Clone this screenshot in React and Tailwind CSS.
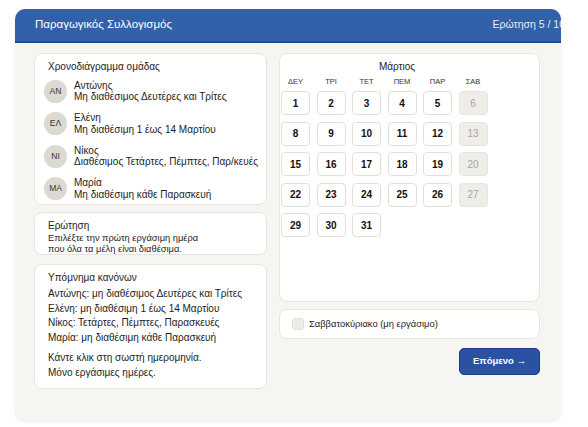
import React from 'react'

const members = [
    { initials: 'AN', name: 'Αντώνης', note: 'Μη διαθέσιμος Δευτέρες και Τρίτες' },
    { initials: 'ΕΛ', name: 'Ελένη', note: 'Μη διαθέσιμη 1 έως 14 Μαρτίου' },
    { initials: 'NI', name: 'Νίκος', note: 'Διαθέσιμος Τετάρτες, Πέμπτες, Παρ/κευές' },
    { initials: 'MA', name: 'Μαρία', note: 'Μη διαθέσιμη κάθε Παρασκευή' },
]

const rules = [
    'Αντώνης: μη διαθέσιμος Δευτέρες και Τρίτες',
    'Ελένη: μη διαθέσιμη 1 έως 14 Μαρτίου',
    'Νίκος: Τετάρτες, Πέμπτες, Παρασκευές',
    'Μαρία: μη διαθέσιμη κάθε Παρασκευή',
]

const dayNames = ['ΔΕΥ', 'ΤΡΙ', 'ΤΕΤ', 'ΠΕΜ', 'ΠΑΡ', 'ΣΑΒ']

// March: rows of Mon..Sat, Sundays left out
const weeks = [
    [1, 2, 3, 4, 5, 6],
    [8, 9, 10, 11, 12, 13],
    [15, 16, 17, 18, 19, 20],
    [22, 23, 24, 25, 26, 27],
    [29, 30, 31],
]

const Card = ({ className = '', children }) => (
    <div className={`bg-white border border-[#e8e5df] rounded-[8px] ${className}`}>{children}</div>
)

export default function App() {
    return (
        <div className="w-[588px] h-[427px] bg-white pt-[9px] pl-[15px] font-['Liberation_Sans',Arial,sans-serif] text-[#1d1d1d]">
            <div className="w-[546px] h-[412px] rounded-[10px] overflow-hidden bg-[#f6f5f2] shadow-[0_1px_3px_rgba(0,0,0,0.08)] flex flex-col">
                <div className="h-[34px] shrink-0 bg-[#3261aa] border-b-2 border-[#24498f] flex items-center pl-[20px] text-white text-[11.5px]">
                    <span>Παραγωγικός Συλλογισμός</span>
                    <span className="ml-auto whitespace-nowrap shrink-0 mr-[-4px] text-[10.5px] text-[#e6ecf7]">Ερώτηση 5 / 10</span>
                </div>

                <div className="flex gap-[12px] pl-[19px] pr-[20px] pt-[10px]">
                    <div className="w-[233px] shrink-0 flex flex-col">
                        <Card className="h-[152px] pt-[6px]">
                            <div className="pl-[13px] text-[10px] leading-[13px]">Χρονοδιάγραμμα ομάδας</div>
                            <div className="flex flex-col mt-[2px]">
                                {members.map((m) => (
                                    <div key={m.initials} className="flex items-center h-[32.5px] pl-[9px]">
                                        <div className="w-[23px] h-[23px] rounded-full bg-[#dcd9d2] flex items-center justify-center text-[8.5px] text-[#333]">
                                            {m.initials}
                                        </div>
                                        <div className="ml-[7px] flex flex-col">
                                            <span className="text-[10px] leading-[11.5px]">{m.name}</span>
                                            <span className="text-[10px] leading-[11.5px] whitespace-nowrap">{m.note}</span>
                                        </div>
                                    </div>
                                ))}
                            </div>
                        </Card>

                        <Card className="h-[43px] mt-[7px] overflow-hidden pl-[13px] pt-[7px]">
                            <div className="text-[10px] leading-[12px]">Ερώτηση</div>
                            <div className="text-[9.3px] leading-[11px] mt-[1px]">
                                Επιλέξτε την πρώτη εργάσιμη ημέρα
                                <br />
                                που όλα τα μέλη είναι διαθέσιμα.
                            </div>
                        </Card>

                        <Card className="h-[125px] mt-[9px] pl-[13px] pt-[7px]">
                            <div className="text-[10px] leading-[12px]">Υπόμνημα κανόνων</div>
                            <div className="mt-[3px] text-[10px] leading-[14.5px] whitespace-nowrap">
                                {rules.map((r) => (
                                    <div key={r}>{r}</div>
                                ))}
                                <div className="mt-[6px]">Κάντε κλικ στη σωστή ημερομηνία.</div>
                                <div>Μόνο εργάσιμες ημέρες.</div>
                            </div>
                        </Card>
                    </div>

                    <div className="w-[261px] shrink-0 flex flex-col">
                        <Card className="h-[249px] pl-[1px] pt-[6px]">
                            <div className="w-[232px] text-center text-[10px] leading-[13px]">Μάρτιος</div>
                            <div className="grid grid-cols-[repeat(6,29px)] gap-x-[6.5px] mt-[4px]">
                                {dayNames.map((d) => (
                                    <div key={d} className="text-center text-[7.5px] leading-[10px] text-[#333]">
                                        {d}
                                    </div>
                                ))}
                            </div>
                            <div className="grid grid-cols-[repeat(6,29px)] gap-x-[6.5px] gap-y-[6.5px] mt-[4px]">
                                {weeks.flatMap((week) =>
                                    week.map((day, i) => {
                                        const off = i === 5
                                        return (
                                            <div
                                                key={day}
                                                className={`h-[24px] rounded-[4px] border flex items-center justify-center text-[10px] ${
                                                    off
                                                        ? 'bg-[#efede8] border-[#e8e5df] text-[#a8a59f]'
                                                        : 'bg-white border-[#e3e0da] text-[#111] font-semibold'
                                                }`}
                                            >
                                                {day}
                                            </div>
                                        )
                                    })
                                )}
                            </div>
                        </Card>

                        <Card className="h-[30px] mt-[7px] flex items-center pl-[12px]">
                            <div className="w-[12px] h-[12px] rounded-[3px] bg-[#efece6] border border-[#e3e0da]" />
                            <span className="ml-[5px] text-[9.4px]">Σαββατοκύριακο (μη εργάσιμο)</span>
                        </Card>

                        <div className="flex justify-end mt-[9px]">
                            <button
                                type="button"
                                className="w-[81px] h-[27px] rounded-[5px] bg-[#2b52a2] border border-[#1c3c82] text-white text-[9.5px] font-semibold flex items-center justify-center"
                            >
                                Επόμενο →
                            </button>
                        </div>
                    </div>
                </div>
            </div>
        </div>
    )
}
